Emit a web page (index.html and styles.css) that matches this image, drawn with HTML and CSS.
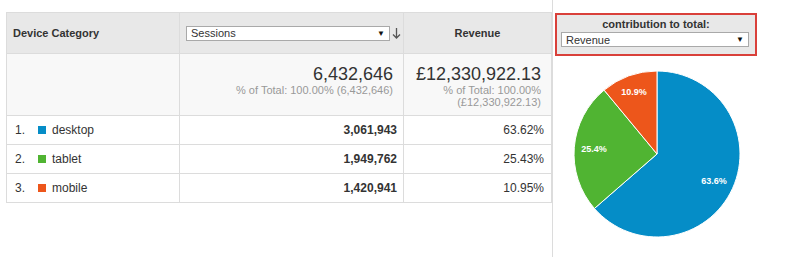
FILE: index.html
```html
<!DOCTYPE html>
<html>
<head>
<meta charset="utf-8">
<link rel="stylesheet" href="styles.css">
</head>
<body>
<div class="page">
  <div class="table-wrap">
    <table class="report">
      <colgroup><col class="c1"><col class="c2"><col class="c3"></colgroup>
      <thead>
        <tr class="head">
          <th class="dim">Device Category</th>
          <th class="metric-sel">
            <div class="sel-row">
              <div class="select"><span>Sessions</span><span class="tri">▼</span></div>
              <svg class="sort" width="9" height="12" viewBox="0 0 9 12"><path d="M4.5 1 V11 M1 7.5 L4.5 11 L8 7.5" fill="none" stroke="#555" stroke-width="1.3"/></svg>
            </div>
          </th>
          <th class="rev">Revenue</th>
        </tr>
      </thead>
      <tbody>
        <tr class="summary">
          <td></td>
          <td class="sum"><div class="big">6,432,646</div><div class="sub">% of Total: 100.00% (6,432,646)</div></td>
          <td class="sum"><div class="big">£12,330,922.13</div><div class="sub">% of Total: 100.00%<br>(£12,330,922.13)</div></td>
        </tr>
        <tr class="row">
          <td><span class="idx">1.</span><span class="sw blue"></span>desktop</td>
          <td class="num">3,061,943</td>
          <td class="pct">63.62%</td>
        </tr>
        <tr class="row">
          <td><span class="idx">2.</span><span class="sw green"></span>tablet</td>
          <td class="num">1,949,762</td>
          <td class="pct">25.43%</td>
        </tr>
        <tr class="row">
          <td><span class="idx">3.</span><span class="sw orange"></span>mobile</td>
          <td class="num">1,420,941</td>
          <td class="pct">10.95%</td>
        </tr>
      </tbody>
    </table>
  </div>
  <div class="panel">
    <div class="contrib">
      <div class="ctitle">contribution to total:</div>
      <div class="select wide"><span>Revenue</span><span class="tri">▼</span></div>
    </div>
    <svg class="pie" width="200" height="200" viewBox="0 0 200 200">
      <path d="M102 97 L102 14 A83 83 0 1 1 39.4 151.5 Z" fill="#058dc7" stroke="#fff" stroke-width="1"/>
      <path d="M102 97 L39.4 151.5 A83 83 0 0 1 49.1 33.1 Z" fill="#50b432" stroke="#fff" stroke-width="1"/>
      <path d="M102 97 L49.1 33.1 A83 83 0 0 1 102 14 Z" fill="#ed561b" stroke="#fff" stroke-width="1"/>
      <text x="159" y="127" class="lbl">63.6%</text>
      <text x="39" y="95" class="lbl">25.4%</text>
      <text x="79" y="38" class="lbl">10.9%</text>
    </svg>
  </div>
</div>
</body>
</html>
```
FILE: styles.css
```css
html, body {
  margin: 0;
  padding: 0;
  background: #fff;
  font-family: "Liberation Sans", Arial, sans-serif;
  color: #333;
}
.page {
  display: flex;
  width: 786px;
  height: 257px;
  overflow: hidden;
}
.table-wrap {
  padding: 12px 0 0 6px;
}
.report {
  border-collapse: collapse;
  table-layout: fixed;
  width: 545px;
}
.c1 { width: 173px; }
.c2 { width: 224px; }
.c3 { width: 148px; }
.report th, .report td {
  border: 1px solid #dcdcdc;
  padding: 0;
}
.head th {
  background: #e8e8e8;
  height: 40px;
  font-size: 11px;
  font-weight: bold;
  color: #333;
}
.head th.dim {
  text-align: left;
  padding-left: 6px;
}
.head th.rev {
  text-align: center;
}
.sel-row {
  display: flex;
  align-items: center;
  padding-left: 6px;
  gap: 2px;
}
.select {
  box-sizing: border-box;
  display: flex;
  justify-content: space-between;
  align-items: center;
  width: 204px;
  height: 15px;
  border: 1px solid #a9a9a9;
  background: #fff;
  font-size: 11px;
  font-weight: normal;
  color: #333;
  padding: 0 4px 0 4px;
}
.tri {
  font-size: 8px;
  color: #111;
}
.sort { display: block; }
.summary td {
  background: #f8f8f8;
  height: 51px;
  vertical-align: top;
}
.sum {
  text-align: right;
  padding: 10px 10px 0 0 !important;
}
.big {
  font-size: 18px;
  line-height: 20px;
  color: #333;
}
.sub {
  font-size: 11px;
  line-height: 12px;
  color: #999;
}
.row td {
  height: 28px;
  font-size: 12px;
  background: #fff;
}
.row td:first-child {
  padding-left: 8px;
}
.idx {
  display: inline-block;
  width: 23px;
}
.sw {
  display: inline-block;
  width: 8px;
  height: 8px;
  margin-right: 6px;
  vertical-align: 0;
}
.blue { background: #058dc7; }
.green { background: #50b432; }
.orange { background: #ed561b; }
.num {
  text-align: right;
  font-weight: bold;
  padding-right: 6px !important;
}
.pct {
  text-align: right;
  padding-right: 7px !important;
}
.panel {
  border-left: 1px solid #dcdcdc;
  padding: 13px 0 0 2px;
  flex: 1;
}
.contrib {
  box-sizing: border-box;
  width: 202px;
  height: 43px;
  border: 2px solid #d9403a;
  background: #e8e8e8;
  padding: 2px 0 0 4px;
}
.ctitle {
  text-align: center;
  font-size: 11px;
  font-weight: bold;
  line-height: 14px;
  color: #333;
  padding-right: 4px;
}
.select.wide {
  width: 188px;
  margin-top: 1px;
}
.pie {
  display: block;
  margin-top: 1px;
}
.lbl {
  fill: #fff;
  font-family: "Liberation Sans", Arial, sans-serif;
  font-size: 9px;
  font-weight: bold;
  text-anchor: middle;
}
```
